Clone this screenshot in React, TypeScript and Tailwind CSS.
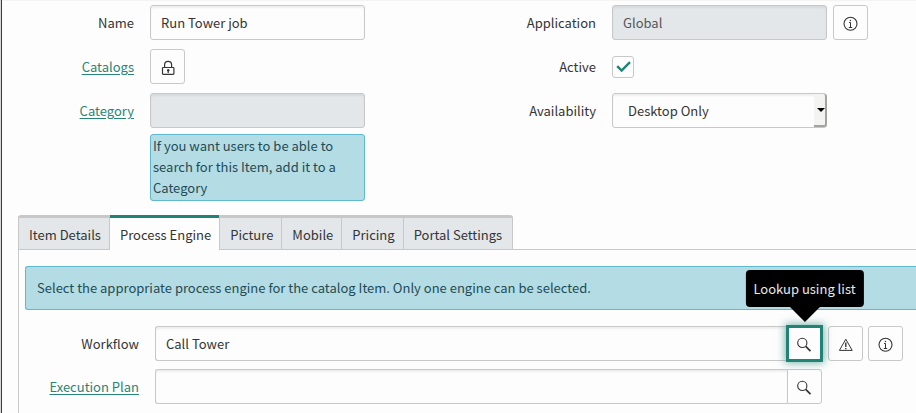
import type { ReactNode } from "react";

const fieldBase =
  "block h-[35px] w-full min-w-0 border border-[#c8c8c8] px-[10px] text-[#343434] shadow-[inset_0_2px_2px_rgba(0,0,0,0.06)] outline-none";
const iconButton =
  "flex h-[35px] w-[35px] shrink-0 items-center justify-center border border-[#c8c8c8] bg-[#fdfdfd] pt-[2px] text-[#343434]";
const link = "text-[#278576] underline underline-offset-2";

function InfoIcon() {
  return (
    <svg width="17" height="17" viewBox="0 0 17 17" fill="none" stroke="currentColor">
      <circle cx="8.5" cy="8.8" r="6.5" strokeWidth="1.1" />
      <path d="M7 7.5H8.5V12M6.8 12.5H10.2" strokeWidth="1" />
      <path d="M7.8 5.5H9.1" strokeWidth="1.3" />
    </svg>
  );
}

function LockIcon() {
  return (
    <svg width="17" height="17" viewBox="0 0 17 17" fill="none" stroke="currentColor">
      <rect x="3.5" y="8.5" width="11.4" height="6.9" rx="0.8" strokeWidth="1.2" />
      <path d="M5.6 8.3V5.8a3.5 3.5 0 0 1 7 0V8.3" strokeWidth="1.2" />
      <path d="M9.2 11V14" strokeWidth="1.2" />
      <circle cx="9.2" cy="11.2" r="1.2" fill="currentColor" stroke="none" />
    </svg>
  );
}

function SearchIcon() {
  return (
    <svg width="17" height="17" viewBox="0 0 17 17" fill="none" stroke="currentColor">
      <circle cx="6.3" cy="6.9" r="4.6" strokeWidth="1.1" />
      <path d="M9.7 10.3L14.5 15.1" strokeWidth="1.7" />
    </svg>
  );
}

function WarningIcon() {
  return (
    <svg width="17" height="17" viewBox="0 0 17 17" fill="none" stroke="currentColor">
      <path d="M8.8 3.2L15.2 14.4H2.4Z" strokeWidth="1" />
      <path d="M8.8 6.6V11" strokeWidth="1.4" />
      <path d="M8.8 12V13.3" strokeWidth="1.4" />
    </svg>
  );
}

function Row({ label, children }: { label: ReactNode; children: ReactNode }) {
  return (
    <div className="flex min-h-[35px] gap-4">
      <div className="flex h-[35px] w-[132px] shrink-0 items-center justify-end">{label}</div>
      <div className="flex min-w-0 flex-1 items-center gap-[6px]">{children}</div>
    </div>
  );
}

function PanelRow({ label, children }: { label: ReactNode; children: ReactNode }) {
  return (
    <div className="flex h-[35px] items-center gap-4">
      <div className="flex w-[120px] shrink-0 justify-end">{label}</div>
      <div className="flex min-w-0 flex-1">{children}</div>
    </div>
  );
}

const tabs = ["Item Details", "Process Engine", "Picture", "Mobile", "Pricing", "Portal Settings"];

export default function App() {
  return (
    <div className="flex min-h-screen border-l border-[#d5d9db] bg-[#fdfdfd] font-['Noto_Sans_CJK_SC',sans-serif] text-[13px] leading-[21px] text-[#343434]">
      <div className="min-w-0 flex-1 overflow-hidden border-l border-[#2c4049]">
        <form className="grid grid-cols-2 gap-x-[10px] border-t border-[#f4f4f4] pt-1">
          <div className="flex flex-col gap-[9px] pr-[89px]">
            <Row label={<label htmlFor="name">Name</label>}>
              <input id="name" defaultValue="Run Tower job" className={`${fieldBase} rounded-[3px] bg-[#fdfdfd]`} />
            </Row>
            <Row label={<a href="#catalogs" className={link}>Catalogs</a>}>
              <button type="button" aria-label="Unlock Catalogs" className={`${iconButton} rounded-[3px]`}>
                <LockIcon />
              </button>
            </Row>
            <Row label={<a href="#category" className={link}>Category</a>}>
              <div className="flex flex-1 flex-col gap-[6px]">
                <input aria-label="Category" readOnly className={`${fieldBase} rounded-[3px] bg-[#e3e7ea]`} />
                <p className="rounded-[3px] border border-[#5fb9cf] bg-[#b4dce4] px-[2px] pb-[2px] text-[#1f4b55]">
                  If you want users to be able to search for this Item, add it to a Category
                </p>
              </div>
            </Row>
          </div>
          <div className="flex flex-col gap-[9px] pr-12">
            <Row label={<label htmlFor="application">Application</label>}>
              <input id="application" readOnly defaultValue="Global" className={`${fieldBase} rounded-[3px] bg-[#e3e7ea] text-[#555555]`} />
              <button type="button" aria-label="Application info" className={`${iconButton} rounded-[3px]`}>
                <InfoIcon />
              </button>
            </Row>
            <Row label={<label htmlFor="active">Active</label>}>
              <span className="grid">
                <input id="active" type="checkbox" defaultChecked className="peer col-start-1 row-start-1 h-[22px] w-[22px] appearance-none rounded-[3px] border border-[#c8c8c8] bg-[#fdfdfd]" />
                <svg className="pointer-events-none invisible col-start-1 row-start-1 h-[22px] w-[22px] peer-checked:visible" viewBox="0 0 22 22" fill="none" stroke="#1f8476" strokeWidth="2.4">
                  <path d="M5.2 10.2L9.6 14.6L18 6.2" />
                </svg>
              </span>
            </Row>
            <Row label={<label htmlFor="availability">Availability</label>}>
              <div className="mr-[41px] grid flex-1">
                <select id="availability" className={`${fieldBase} col-start-1 row-start-1 appearance-none rounded-[3px] bg-[#fdfdfd] pl-[15px]`}>
                  <option>Desktop Only</option>
                </select>
                <span className="pointer-events-none col-start-1 row-start-1 my-px flex w-[13px] items-center justify-end justify-self-end rounded-r-[3px] border-r-2 border-b-2 border-[#a3a3a0] bg-[#f3f3f1]">
                  <svg width="8" height="4" viewBox="0 0 8 4"><path d="M0 0H8L4 4Z" fill="#000" /></svg>
                </span>
              </div>
            </Row>
          </div>
        </form>

        <section className="mt-[14px] pl-4">
          <div role="tablist" className="flex border-b border-[#c8c8c8]">
            {tabs.map((tab, i) => (
              <button
                key={tab}
                type="button"
                role="tab"
                aria-selected={i === 1}
                className={
                  i === 1
                    ? "-mb-px h-[35px] border-t-[3px] border-[#1f8476] bg-[#fdfdfd] pr-2 pl-[10px]"
                    : "h-[34px] border-t-[3px] border-l border-[#c8c8c8] bg-[#e3e7ea] pt-px pr-2 pl-[10px] first:rounded-tl-[3px] first:border-r last:rounded-tr-[3px] last:border-r last:pr-[10px]"
                }
              >
                {tab}
              </button>
            ))}
          </div>
          <div className="flex flex-col gap-2 border-l border-[#c8c8c8] pt-4 pb-[9px]">
            <p className="mb-2 ml-[6px] rounded-l-[3px] border border-r-0 border-[#5fb9cf] bg-[#b4dce4] px-[11px] pt-[10px] pb-[11px] text-[#1f4b55]">
              Select the appropriate process engine for the catalog Item. Only one engine can be selected.
            </p>
            <PanelRow label={<label htmlFor="workflow">Workflow</label>}>
              <input id="workflow" defaultValue="Call Tower" className={`${fieldBase} flex-1 rounded-l-[3px] border-r-0 bg-[#fdfdfd]`} />
              <div className="relative -mx-px -my-px">
                <button type="button" aria-label="Lookup using list" aria-describedby="lookup-tip" className="flex h-[37px] w-[37px] items-center justify-center border-[3px] border-[#1f8476] bg-[#fdfdfd] pt-[2px] text-[#343434] shadow-[0_0_8px_1px_rgba(31,132,118,0.6)]">
                  <SearchIcon />
                </button>
                <div id="lookup-tip" role="tooltip" className="absolute bottom-full left-1/2 mb-[3px] flex -translate-x-1/2 flex-col items-center">
                  <span className="rounded-[4px] bg-black px-2 py-2 whitespace-nowrap text-[#e8e8e8]">Lookup using list</span>
                  <svg width="30" height="15" viewBox="0 0 30 15"><path d="M0 0H30L15 15Z" fill="#000" /></svg>
                </div>
              </div>
              <div className="mr-[13px] ml-[6px] flex gap-[5px]">
                <button type="button" aria-label="Workflow warning" className={`${iconButton} rounded-[3px]`}>
                  <WarningIcon />
                </button>
                <button type="button" aria-label="Workflow info" className={`${iconButton} rounded-[3px]`}>
                  <InfoIcon />
                </button>
              </div>
            </PanelRow>
            <PanelRow label={<a href="#execution-plan" className={link}>Execution Plan</a>}>
              <input aria-label="Execution Plan" className={`${fieldBase} flex-1 rounded-l-[3px] border-r-0 bg-[#fdfdfd]`} />
              <button type="button" aria-label="Look up execution plan" className={`${iconButton} mr-[94px] rounded-r-[3px]`}>
                <SearchIcon />
              </button>
            </PanelRow>
          </div>
        </section>
      </div>
    </div>
  );
}
